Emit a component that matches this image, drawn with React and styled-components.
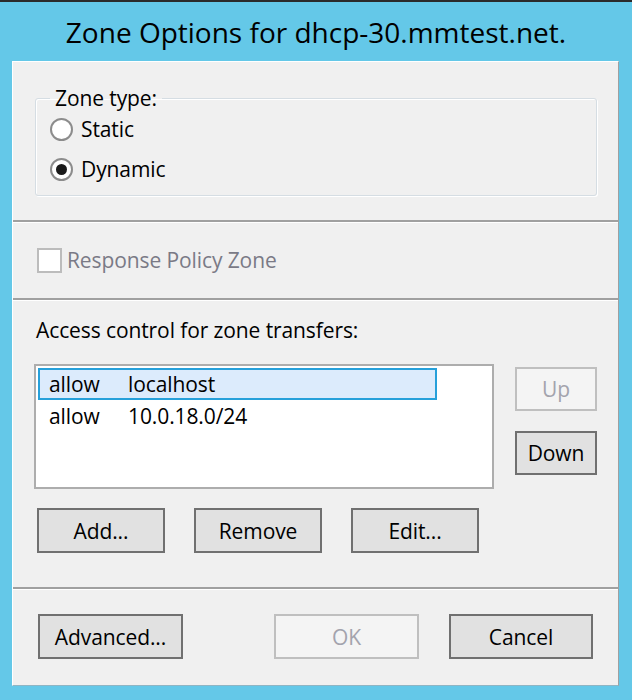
import styled, { createGlobalStyle } from "styled-components";

const GlobalStyle = createGlobalStyle`
  html, body {
    margin: 0;
    padding: 0;
  }
  body {
    width: 632px;
    height: 700px;
    overflow: hidden;
    background: #64c8e8;
    font-family: "Open Sans", "Noto Sans", sans-serif;
    color: #000;
  }
`;

const Window = styled.div`
  box-sizing: border-box;
  width: 632px;
  height: 700px;
  display: flex;
  flex-direction: column;
  background: #64c8e8;
  border-top: 2px solid #2b2b2b;
`;

const TitleBar = styled.div`
  height: 59px;
  display: flex;
  align-items: center;
  justify-content: center;
  font-size: 28px;
`;

const Panel = styled.div`
  flex: 1;
  margin: 0 13px 14px 12px;
  display: flex;
  flex-direction: column;
  background: #f0f0f0;
  border-top: 1px solid #fff;
  border-left: 1px solid #fff;
  border-right: 1px solid #a0a0a0;
  border-bottom: 1px solid #8fb5c4;
  font-size: 21px;
  letter-spacing: -0.1px;
`;

const Divider = styled.div`
  height: 2px;
  background: #a0a0a0;
  border-bottom: 1px solid #fff;
`;

const TypeSection = styled.div`
  padding: 23px 21px 24px 22px;
`;

const GroupBox = styled.fieldset`
  margin: 0;
  padding: 4px 14px 12px;
  border: 1px solid #d5dde3;
  border-radius: 3px;
  box-shadow: inset 1px 1px 0 #fff, 1px 1px 0 #fff;
  display: flex;
  flex-direction: column;
  gap: 12px;
`;

const Legend = styled.legend`
  padding: 0 5px;
  line-height: 26px;
`;

const OptionRow = styled.label`
  display: flex;
  align-items: center;
  gap: ${(p) => p.$gap || 8}px;
  height: 28px;
  color: ${(p) => (p.$disabled ? "#7a7a86" : "#000")};
`;

const RadioCircle = styled.span`
  box-sizing: border-box;
  width: 23px;
  height: 23px;
  border-radius: 50%;
  border: 2px solid #8c8c8c;
  background: #fff;
  display: flex;
  align-items: center;
  justify-content: center;

  &::after {
    content: "";
    width: 11px;
    height: 11px;
    border-radius: 50%;
    background: ${(p) => (p.$checked ? "#1a1a1a" : "transparent")};
  }
`;

const PolicySection = styled.div`
  padding: 23px 21px 24px 24px;
`;

const CheckSquare = styled.span`
  box-sizing: border-box;
  width: 25px;
  height: 25px;
  border: 2px solid #bcbcbc;
  background: #fff;
`;

const AccessSection = styled.div`
  padding: 16px 21px 34px 21px;
  display: flex;
  flex-direction: column;
`;

const Caption = styled.div`
  line-height: 26px;
  padding-left: 2px;
`;

const ListArea = styled.div`
  margin-top: 21px;
  display: flex;
  align-items: flex-start;
  gap: 21px;
`;

const ListBox = styled.div`
  box-sizing: border-box;
  width: 462px;
  height: 125px;
  padding: 2px;
  border: 2px solid #adadad;
  background: #fff;
`;

const ListItem = styled.div`
  box-sizing: border-box;
  width: 399px;
  height: 32px;
  display: grid;
  grid-template-columns: 79px 1fr;
  align-items: center;
  padding-left: 9px;
  border: 2px solid ${(p) => (p.$selected ? "#26a0da" : "transparent")};
  background: ${(p) => (p.$selected ? "#dcebfc" : "transparent")};
`;

const SideButtons = styled.div`
  margin-top: 3px;
  display: flex;
  flex-direction: column;
  gap: 20px;
`;

const Button = styled.button`
  box-sizing: border-box;
  width: ${(p) => p.$w || 128}px;
  height: ${(p) => p.$h || 45}px;
  padding: 0;
  font-family: inherit;
  font-size: 21px;
  letter-spacing: -0.1px;
  border: 2px solid ${(p) => (p.disabled ? "#bfbfbf" : "#707070")};
  background: ${(p) => (p.disabled ? "#f4f4f4" : "#e1e1e1")};
  color: ${(p) => (p.disabled ? "#a3a3ad" : "#000")};
`;

const ButtonRow = styled.div`
  margin-top: 19px;
  padding-left: 3px;
  display: flex;
  gap: 29px;
`;

const Footer = styled.div`
  padding: 24px 25px 0;
  display: flex;
  justify-content: space-between;
`;

const DialogActions = styled.div`
  display: flex;
  gap: 30px;
`;

const rules = [
  { action: "allow", target: "localhost", selected: true },
  { action: "allow", target: "10.0.18.0/24" },
];

export default function App() {
  return (
    <>
      <GlobalStyle />
      <Window>
        <TitleBar>Zone Options for dhcp-30.mmtest.net.</TitleBar>
        <Panel>
          <TypeSection>
            <GroupBox>
              <Legend>Zone type:</Legend>
              <OptionRow>
                <RadioCircle />
                Static
              </OptionRow>
              <OptionRow>
                <RadioCircle $checked />
                Dynamic
              </OptionRow>
            </GroupBox>
          </TypeSection>
          <Divider />
          <PolicySection>
            <OptionRow $disabled $gap={5}>
              <CheckSquare />
              Response Policy Zone
            </OptionRow>
          </PolicySection>
          <Divider />
          <AccessSection>
            <Caption>Access control for zone transfers:</Caption>
            <ListArea>
              <ListBox>
                {rules.map((r) => (
                  <ListItem key={r.target} $selected={r.selected}>
                    <span>{r.action}</span>
                    <span>{r.target}</span>
                  </ListItem>
                ))}
              </ListBox>
              <SideButtons>
                <Button $w={82} $h={44} disabled>
                  Up
                </Button>
                <Button $w={82} $h={44}>
                  Down
                </Button>
              </SideButtons>
            </ListArea>
            <ButtonRow>
              <Button>Add...</Button>
              <Button>Remove</Button>
              <Button>Edit...</Button>
            </ButtonRow>
          </AccessSection>
          <Divider />
          <Footer>
            <Button $w={145}>Advanced...</Button>
            <DialogActions>
              <Button $w={145} disabled>
                OK
              </Button>
              <Button $w={144}>Cancel</Button>
            </DialogActions>
          </Footer>
        </Panel>
      </Window>
    </>
  );
}
